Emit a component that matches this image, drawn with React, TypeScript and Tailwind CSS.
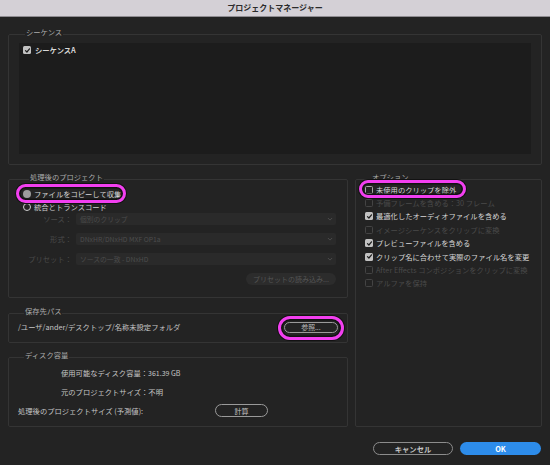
import React from 'react';

const Check = ({ checked, disabled }: { checked?: boolean; disabled?: boolean }) => (
  <span
    className={`w-[8px] h-[8px] rounded-[1.5px] shrink-0 flex items-center justify-center ${
      checked ? 'bg-[#c2c2c2]' : disabled ? 'border border-[#444444]' : 'border border-[#a6a6a6]'
    }`}
  >
    {checked && (
      <svg viewBox="0 0 8 8" className="w-[7px] h-[7px]">
        <path d="M1.7 4.1 L3.3 5.7 L6.3 2.1" fill="none" stroke="#1d1d1d" strokeWidth="1.4" strokeLinecap="round" strokeLinejoin="round" />
      </svg>
    )}
  </span>
);

const Highlight = ({ className }: { className: string }) => (
  <span
    className={`absolute pointer-events-none rounded-full border-[3px] border-[#f23ff0] shadow-[inset_0_0_0_1.5px_#121212,0_0_0_1px_#121212] ${className}`}
  />
);

const Group = ({ label, className, children }: { label: string; className?: string; children: React.ReactNode }) => (
  <fieldset className={`border border-[#343434] rounded-[2px] ${className ?? ''}`}>
    <legend className="ml-[6px] px-[1px] pb-[4px] text-[7.3px] leading-[10px] text-[#acacac]">{label}</legend>
    {children}
  </fieldset>
);

const Chevron = () => (
  <svg viewBox="0 0 8 8" className="w-[6px] h-[6px]">
    <path d="M1.5 3 L4 5.5 L6.5 3" fill="none" stroke="#4f4f4f" strokeWidth="1.2" strokeLinecap="round" strokeLinejoin="round" />
  </svg>
);

const SelectRow = ({ label, value, className }: { label: string; value: string; className?: string }) => (
  <div className={`flex items-center h-[12px] ${className ?? ''}`}>
    <span className="w-[49px] text-right text-[7.3px] leading-[10px] text-[#4a4a4a]">{label}</span>
    <div className="ml-[4px] flex-1 h-full bg-[#2a2a2a] rounded-[2px] flex items-center justify-between pl-[4px] pr-[3px]">
      <span className="text-[6.8px] leading-[10px] text-[#4c4c4c]">{value}</span>
      <Chevron />
    </div>
  </div>
);

const options = [
  { label: '未使用のクリップを除外', checked: false, disabled: false },
  { label: '予備フレームを含める：30 フレーム', checked: false, disabled: true },
  { label: '最適化したオーディオファイルを含める', checked: true, disabled: false },
  { label: 'イメージシーケンスをクリップに変換', checked: false, disabled: true },
  { label: 'プレビューファイルを含める', checked: true, disabled: false },
  { label: 'クリップ名に合わせて実際のファイル名を変更', checked: true, disabled: false },
  { label: 'After Effects コンポジションをクリップに変換', checked: false, disabled: true },
  { label: 'アルファを保持', checked: false, disabled: true },
];

const App = () => {
  return (
    <div className="w-[550px] h-[465px] bg-[#232323] flex flex-col overflow-hidden font-['Noto_Sans_CJK_JP','Noto_Sans',sans-serif]">
      {/* title bar */}
      <div className="h-[17px] shrink-0 bg-[#d4d0d6] border-b border-[#8f8c91] flex items-center justify-center">
        <span className="text-[8px] leading-[10px] font-bold text-[#2b2b2b]">プロジェクトマネージャー</span>
      </div>

      <div className="flex-1 flex flex-col px-[8px] pt-[10px]">
        <Group label="シーケンス" className="pt-[2px] pb-[10px] px-[10px]">
          <div className="h-[111px] bg-[#1c1c1c] pt-[2px] pl-[4px]">
            <div className="flex items-center h-[10px] gap-[4px]">
              <Check checked />
              <span className="text-[7.3px] leading-[10px] text-[#d8d8d8] font-bold">シーケンスA</span>
            </div>
          </div>
        </Group>

        <div className="flex gap-[7px] mt-[7px]">
          <div className="w-[340px] flex flex-col">
            <Group label="処理後のプロジェクト" className="pt-[1px] pb-[12px] pl-[14px] pr-[11px]">
              <div className="relative w-fit flex items-center h-[13px] gap-[3px]">
                <span className="w-[8px] h-[8px] rounded-full bg-[#9c9c9c]" />
                <span className="text-[7.3px] leading-[10px] text-[#d6d6d6]">ファイルをコピーして収集</span>
                <Highlight className="-left-[7px] -right-[5px] -top-[3px] -bottom-[3px]" />
              </div>
              <div className="flex items-center h-[13px] gap-[3px]">
                <span className="w-[8px] h-[8px] rounded-full border border-[#d0d0d0]" />
                <span className="text-[7.3px] leading-[10px] text-[#d0d0d0]">統合とトランスコード</span>
              </div>
              <SelectRow label="ソース：" value="個別のクリップ" />
              <SelectRow label="形式：" value="DNxHR/DNxHD MXF OP1a" className="mt-[8px]" />
              <SelectRow label="プリセット：" value="ソースの一致 - DNxHD" className="mt-[8px]" />
              <div className="flex justify-end mt-[8px]">
                <div className="w-[90px] h-[12px] rounded-full bg-[#2c2c2c] flex items-center justify-center">
                  <span className="text-[7px] leading-[10px] text-[#555555]">プリセットの読み込み...</span>
                </div>
              </div>
            </Group>

            <Group label="保存先パス" className="mt-[8px] pt-[1px] pb-[9px] px-[9px]">
              <div className="flex items-center justify-between h-[12px]">
                <span className="text-[7.3px] leading-[10px] text-[#c4c4c4]">/ユーザ/ander/デスクトップ/名称未設定フォルダ</span>
                <div className="relative">
                  <div className="w-[54px] h-[11px] rounded-full border border-[#9a9a9a] flex items-center justify-center">
                    <span className="text-[6.8px] leading-[9px] text-[#bdbdbd]">参照...</span>
                  </div>
                  <Highlight className="-left-[6px] -right-[6px] -top-[6px] -bottom-[7px]" />
                </div>
              </div>
            </Group>

            <Group label="ディスク容量" className="mt-[7px] pt-[2px] pb-[9px] px-[9px]">
              <div className="ml-[43px] flex items-center h-[13px]">
                <span className="text-[7.3px] leading-[10px] text-[#c6c6c6]">使用可能なディスク容量：</span>
                <span className="text-[7px] leading-[10px] text-[#c6c6c6]">361.39 GB</span>
              </div>
              <div className="ml-[43px] mt-[6px] flex items-center h-[13px]">
                <span className="text-[7.3px] leading-[10px] text-[#c6c6c6]">元のプロジェクトサイズ：不明</span>
              </div>
              <div className="mt-[6px] flex items-center h-[13px]">
                <span className="w-[197px] text-[7.3px] leading-[10px] text-[#c6c6c6]">処理後のプロジェクトサイズ (予測値):</span>
                <div className="w-[53px] h-[13px] rounded-full border border-[#9a9a9a] flex items-center justify-center">
                  <span className="text-[7px] leading-[10px] text-[#c4c4c4]">計算</span>
                </div>
              </div>
            </Group>
          </div>

          <Group label="オプション" className="flex-1 pl-[9px] pr-[8px]">
            <div className="-mt-[3px] flex flex-col">
              {options.map((o, i) => (
                <div key={i} className="relative w-fit flex items-center h-[13.4px] gap-[3px]">
                  <Check checked={o.checked} disabled={o.disabled} />
                  <span className={`text-[7.3px] leading-[10px] whitespace-nowrap ${o.disabled ? 'text-[#4a4a4a]' : 'text-[#d6d6d6]'}`}>
                    {o.label}
                  </span>
                  {i === 0 && <Highlight className="-left-[6px] -right-[10px] -top-[3px] -bottom-[2px]" />}
                </div>
              ))}
            </div>
          </Group>
        </div>

        <div className="flex justify-end gap-[7px] mt-[15px] mr-[1px]">
          <div className="w-[80px] h-[13px] rounded-full border-[1.5px] border-[#8c8c8c] flex items-center justify-center">
            <span className="text-[7.3px] leading-[10px] font-bold text-[#c4c4c4]">キャンセル</span>
          </div>
          <div className="w-[81px] h-[13px] rounded-full bg-[#2d8cea] flex items-center justify-center">
            <span className="text-[7.3px] leading-[10px] font-bold text-white">OK</span>
          </div>
        </div>
      </div>
    </div>
  );
};

export default App;
